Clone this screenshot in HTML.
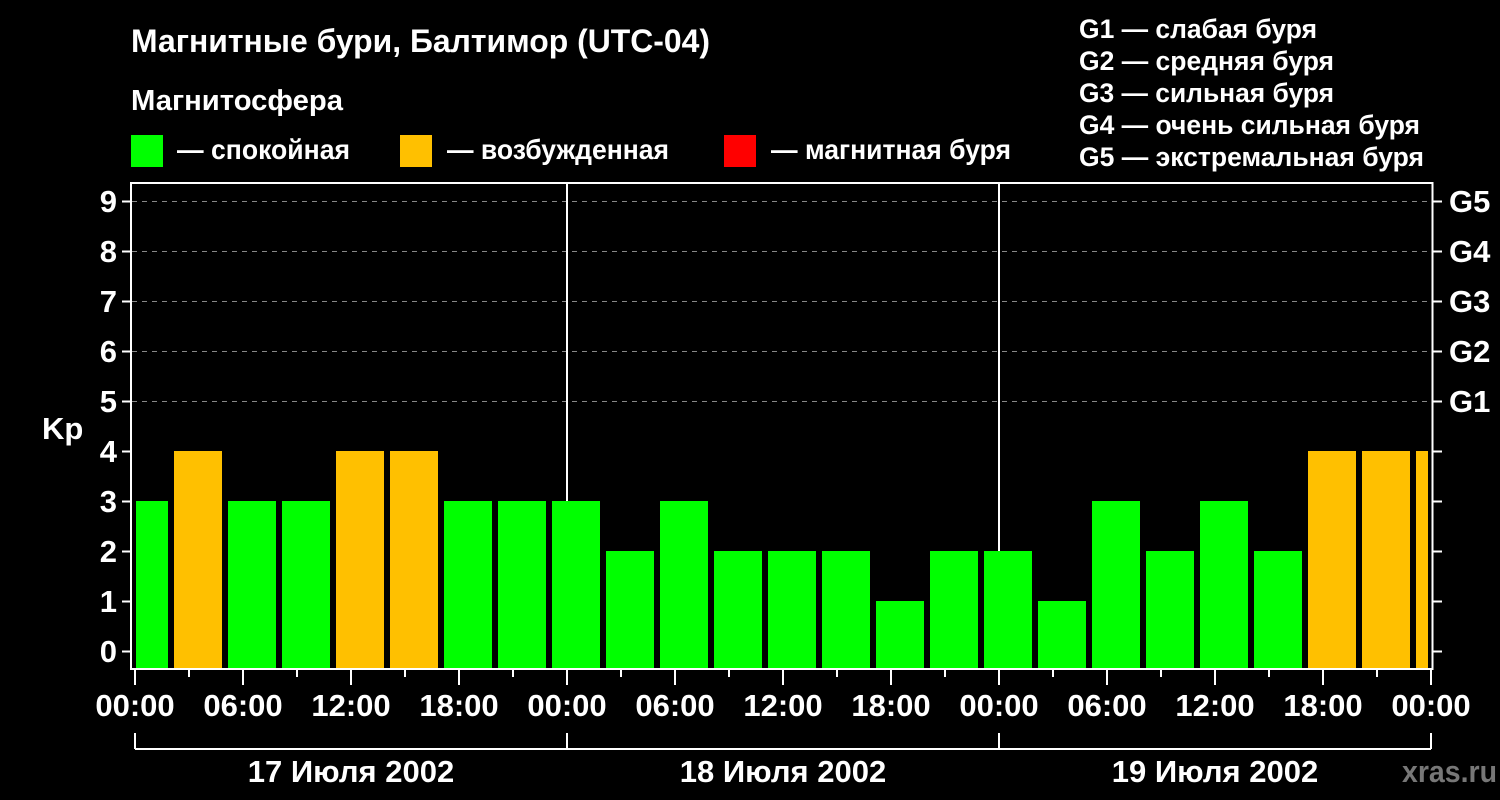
<!DOCTYPE html>
<html><head><meta charset="utf-8"><style>
html,body{margin:0;padding:0;background:#000;width:1500px;height:800px;overflow:hidden}
svg{display:block}
text{font-family:"Liberation Sans",sans-serif;font-weight:bold;fill:#fff}
</style></head><body>
<svg width="1500" height="800" viewBox="0 0 1500 800" xmlns="http://www.w3.org/2000/svg">
<rect width="1500" height="800" fill="#000"/>
<text x="131" y="52" font-size="32" textLength="579" lengthAdjust="spacingAndGlyphs">Магнитные бури, Балтимор (UTC-04)</text>
<text x="131" y="110" font-size="29" textLength="212" lengthAdjust="spacingAndGlyphs">Магнитосфера</text>
<rect x="131" y="135" width="32" height="32" fill="#00ff00"/>
<text x="177" y="159" font-size="28" textLength="173" lengthAdjust="spacingAndGlyphs">— спокойная</text>
<rect x="400" y="135" width="32" height="32" fill="#ffc000"/>
<text x="447" y="159" font-size="28" textLength="222" lengthAdjust="spacingAndGlyphs">— возбужденная</text>
<rect x="724" y="135" width="32" height="32" fill="#ff0000"/>
<text x="771" y="159" font-size="28" textLength="240" lengthAdjust="spacingAndGlyphs">— магнитная буря</text>
<g font-size="27">
<text x="1079" y="38" textLength="238" lengthAdjust="spacingAndGlyphs">G1 — слабая буря</text>
<text x="1079" y="70" textLength="255" lengthAdjust="spacingAndGlyphs">G2 — средняя буря</text>
<text x="1079" y="102" textLength="255" lengthAdjust="spacingAndGlyphs">G3 — сильная буря</text>
<text x="1079" y="134" textLength="341" lengthAdjust="spacingAndGlyphs">G4 — очень сильная буря</text>
<text x="1079" y="166" textLength="345" lengthAdjust="spacingAndGlyphs">G5 — экстремальная буря</text>
</g>
<g stroke="#888" stroke-width="1" stroke-dasharray="5,5">
<line x1="132" y1="201.5" x2="1432" y2="201.5"/>
<line x1="132" y1="251.5" x2="1432" y2="251.5"/>
<line x1="132" y1="301.5" x2="1432" y2="301.5"/>
<line x1="132" y1="351.5" x2="1432" y2="351.5"/>
<line x1="132" y1="401.5" x2="1432" y2="401.5"/>
</g>
<g stroke="#fff" stroke-width="2">
<line x1="567" y1="183" x2="567" y2="668"/>
<line x1="999" y1="183" x2="999" y2="668"/>
</g>
<g>
<rect x="136" y="501" width="32" height="167" fill="#00ff00"/>
<rect x="174" y="451" width="48" height="217" fill="#ffc000"/>
<rect x="228" y="501" width="48" height="167" fill="#00ff00"/>
<rect x="282" y="501" width="48" height="167" fill="#00ff00"/>
<rect x="336" y="451" width="48" height="217" fill="#ffc000"/>
<rect x="390" y="451" width="48" height="217" fill="#ffc000"/>
<rect x="444" y="501" width="48" height="167" fill="#00ff00"/>
<rect x="498" y="501" width="48" height="167" fill="#00ff00"/>
<rect x="552" y="501" width="48" height="167" fill="#00ff00"/>
<rect x="606" y="551" width="48" height="117" fill="#00ff00"/>
<rect x="660" y="501" width="48" height="167" fill="#00ff00"/>
<rect x="714" y="551" width="48" height="117" fill="#00ff00"/>
<rect x="768" y="551" width="48" height="117" fill="#00ff00"/>
<rect x="822" y="551" width="48" height="117" fill="#00ff00"/>
<rect x="876" y="601" width="48" height="67" fill="#00ff00"/>
<rect x="930" y="551" width="48" height="117" fill="#00ff00"/>
<rect x="984" y="551" width="48" height="117" fill="#00ff00"/>
<rect x="1038" y="601" width="48" height="67" fill="#00ff00"/>
<rect x="1092" y="501" width="48" height="167" fill="#00ff00"/>
<rect x="1146" y="551" width="48" height="117" fill="#00ff00"/>
<rect x="1200" y="501" width="48" height="167" fill="#00ff00"/>
<rect x="1254" y="551" width="48" height="117" fill="#00ff00"/>
<rect x="1308" y="451" width="48" height="217" fill="#ffc000"/>
<rect x="1362" y="451" width="48" height="217" fill="#ffc000"/>
<rect x="1416" y="451" width="12" height="217" fill="#ffc000"/>
</g>
<rect x="131" y="183" width="1301.5" height="486" fill="none" stroke="#fff" stroke-width="2"/>
<g stroke="#fff" stroke-width="2">
<path d="M122 201.5h9M122 251.5h9M122 301.5h9M122 351.5h9M122 401.5h9M122 451.5h9M122 501.5h9M122 551.5h9M122 601.5h9M122 651.5h9"/>
<path d="M1433 201.5h9M1433 251.5h9M1433 301.5h9M1433 351.5h9M1433 401.5h9M1433 451.5h9M1433 501.5h9M1433 551.5h9M1433 601.5h9M1433 651.5h9"/>
<path d="M135 669v16M189 669v8M243 669v16M297 669v8M351 669v16M405 669v8M459 669v16M513 669v8M567 669v16M621 669v8M675 669v16M729 669v8M783 669v16M837 669v8M891 669v16M945 669v8M999 669v16M1053 669v8M1107 669v16M1161 669v8M1215 669v16M1269 669v8M1323 669v16M1377 669v8M1431 669v16"/>
<path d="M135 733v16M567 733v16M999 733v16M1431 733v16M135 749H1431"/>
</g>
<g font-size="31" text-anchor="end">
<text x="117" y="212">9</text><text x="117" y="262">8</text><text x="117" y="312">7</text>
<text x="117" y="362">6</text><text x="117" y="412">5</text><text x="117" y="462">4</text>
<text x="117" y="512">3</text><text x="117" y="562">2</text><text x="117" y="612">1</text>
<text x="117" y="662">0</text>
</g>
<g font-size="31">
<text x="1449" y="212">G5</text><text x="1449" y="262">G4</text><text x="1449" y="312">G3</text>
<text x="1449" y="362">G2</text><text x="1449" y="412">G1</text>
</g>
<text x="42" y="439" font-size="31">Kp</text>
<g font-size="31" text-anchor="middle">
<text x="135" y="716">00:00</text><text x="243" y="716">06:00</text><text x="351" y="716">12:00</text><text x="459" y="716">18:00</text>
<text x="567" y="716">00:00</text><text x="675" y="716">06:00</text><text x="783" y="716">12:00</text><text x="891" y="716">18:00</text>
<text x="999" y="716">00:00</text><text x="1107" y="716">06:00</text><text x="1215" y="716">12:00</text><text x="1323" y="716">18:00</text>
<text x="1431" y="716">00:00</text>
<text x="351" y="782">17 Июля 2002</text>
<text x="783" y="782">18 Июля 2002</text>
<text x="1215" y="782">19 Июля 2002</text>
</g>
<text x="1402" y="782" font-size="31" style="fill:#777" textLength="95" lengthAdjust="spacingAndGlyphs">xras.ru</text>
</svg>
</body></html>
